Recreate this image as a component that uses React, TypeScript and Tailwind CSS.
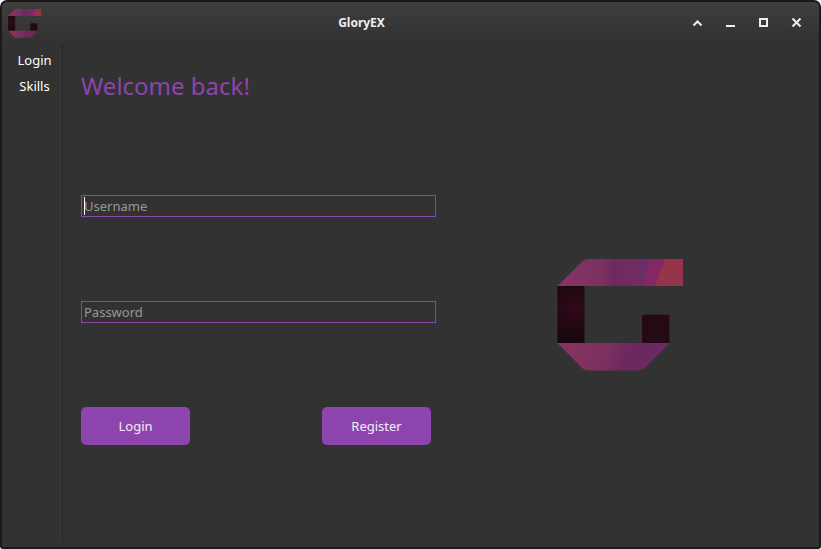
import { useId } from 'react';

function Logo({ className }: { className: string }) {
  const id = useId().replace(/[^a-zA-Z0-9]/g, '');
  return (
    <svg viewBox="0 0 126 112" preserveAspectRatio="none" className={className} aria-hidden="true">
      <defs>
        <linearGradient id={`${id}t`} gradientUnits="userSpaceOnUse" x1="0" y1="14" x2="126" y2="18">
          <stop offset="0" stopColor="#883464" />
          <stop offset="0.36" stopColor="#7b315f" />
          <stop offset="0.46" stopColor="#6b295e" />
          <stop offset="0.6" stopColor="#742b63" />
          <stop offset="0.72" stopColor="#6c2d6b" />
        </linearGradient>
        <linearGradient id={`${id}b`} gradientUnits="userSpaceOnUse" x1="4" y1="84" x2="112" y2="112">
          <stop offset="0" stopColor="#873560" />
          <stop offset="0.42" stopColor="#7b305f" />
          <stop offset="0.6" stopColor="#6c285f" />
          <stop offset="1" stopColor="#6c2866" />
        </linearGradient>
        <radialGradient id={`${id}s`} gradientUnits="userSpaceOnUse" cx="19" cy="50" r="28">
          <stop offset="0" stopColor="#32081b" />
          <stop offset="1" stopColor="#1b080f" />
        </radialGradient>
      </defs>
      <path d="M.5 27 24 3.5Q27.5 0 31 0H126V27Z" fill={`url(#${id}t)`} />
      <path d="M94 0H108L98 27H85Z" fill="#842865" />
      <path d="M108 0H126V27H98Z" fill="#95354c" />
      <path d="M.5 27H27.500V84H.5Z" fill={`url(#${id}s)`} />
      <path d="M85 58Q85 55.500 88 55.500H109.500Q112.500 55.500 112.500 58V84H85Z" fill="#250a15" />
      <path d="M.5 84H112.500L89 108Q85.500 111.500 81 111.500H33Q27 111.500 24 108Z" fill={`url(#${id}b)`} />
    </svg>
  );
}

function WindowControls() {
  return (
    <div className="flex items-center gap-[23px] pr-[18px]">
      <button aria-label="Shade">
        <svg className="block size-[10px] overflow-visible" viewBox="0 0 10 10" fill="none" stroke="#eeeeec" strokeWidth="2">
          <path d="m1.500 7.500 4-4 4 4" />
        </svg>
      </button>
      <button aria-label="Minimize">
        <svg className="block size-[10px]" viewBox="0 0 10 10" fill="#eeeeec" shapeRendering="crispEdges">
          <path d="M1 7h9v2H1z" />
        </svg>
      </button>
      <button aria-label="Maximize">
        <svg className="block size-[10px]" viewBox="0 0 10 10" fill="none" stroke="#eeeeec" strokeWidth="2" shapeRendering="crispEdges">
          <path d="M2 1h7v7H2z" />
        </svg>
      </button>
      <button aria-label="Close">
        <svg className="block size-[10px]" viewBox="0 0 10 10" fill="none" stroke="#eeeeec" strokeWidth="2">
          <path d="m1.500.5 8 8m0-8-8 8" />
        </svg>
      </button>
    </div>
  );
}

const inputClass =
  'block h-[22px] w-[355px] border border-[#8e44ad] bg-transparent px-[2px] text-[13px] text-white outline-none placeholder:text-[#989898]';
const buttonClass = 'h-[38px] w-[109px] rounded-[5px] bg-[#8e44ad] pt-px text-[13px] text-[#f3edf5]';

export default function App() {
  return (
    <div className="h-[549px] w-[821px] bg-white font-['Noto_Sans',sans-serif]">
      <div className="flex h-full flex-col overflow-hidden rounded-t-[7px] rounded-b-[3px] border-2 border-[#1b1919] bg-[#323232] text-[13px]">
        <header className="grid h-[41px] shrink-0 grid-cols-[1fr_auto_1fr] items-center bg-linear-to-b from-[#3e3e3e] to-[#323232]">
          <div className="pl-[6px] pt-[2px]">
            <Logo className="block h-[29px] w-[33px]" />
          </div>
          <h1 className="pr-[98px] text-[12px] font-bold text-[#eeeeec]">GloryEX</h1>
          <div className="flex justify-end">
            <WindowControls />
          </div>
        </header>
        <div className="flex min-h-0 grow pb-[4px]">
          <nav className="flex w-[61px] shrink-0 flex-col items-center border-r border-[#252525] pt-[4px] pl-[5px] leading-[26px] text-white">
            <a>Login</a>
            <a>Skills</a>
          </nav>
          <main className="flex grow pl-[18px]">
            <form className="w-[355px]" onSubmit={(e) => e.preventDefault()}>
              <h2 className="pt-[25px] text-[24px] leading-9 text-[#8e44ad]">Welcome back!</h2>
              <div className="relative mt-[91px]">
                <input className={inputClass} placeholder="Username" />
                <span className="absolute left-[3px] top-[2px] h-[18px] w-px bg-white" />
              </div>
              <input className={`${inputClass} mt-[84px]`} type="password" placeholder="Password" />
              <div className="mt-[84px] flex justify-between pr-[5px]">
                <button className={buttonClass}>Login</button>
                <button className={buttonClass}>Register</button>
              </div>
            </form>
            <div className="pl-[121px] pt-[216px]">
              <Logo className="block h-[112px] w-[126px]" />
            </div>
          </main>
        </div>
      </div>
    </div>
  );
}
